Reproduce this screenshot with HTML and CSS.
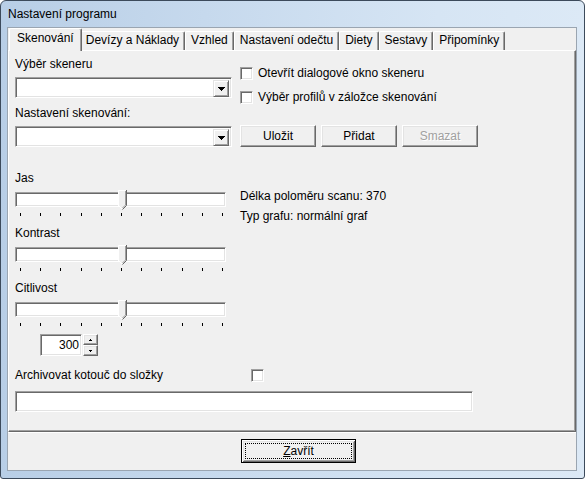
FILE: index.html
```html
<!DOCTYPE html>
<html lang="cs">
<head>
<meta charset="utf-8">
<title>Nastavení programu</title>
<link rel="stylesheet" href="styles.css">
</head>
<body>
<div class="window">
  <div class="titlebar">Nastavení programu</div>
  <div class="client">
    <div class="tabstrip">
      <div class="tab active">Skenování</div>
      <div class="tab">Devízy a Náklady</div>
      <div class="tab">Vzhled</div>
      <div class="tab">Nastavení odečtu</div>
      <div class="tab">Diety</div>
      <div class="tab">Sestavy</div>
      <div class="tab">Připomínky</div>
    </div>
    <div class="page">
      <div class="sec1">
        <div class="leftcol">
          <div class="label">Výběr skeneru</div>
          <div class="combo"><span class="drop"><svg width="7" height="4" viewBox="0 0 7 4"><path d="M0 0h7v1h-1v1h-1v1h-1v1h-1v-1h-1v-1h-1v-1h-1z" fill="#000"/></svg></span></div>
          <div class="label second">Nastavení skenování:</div>
          <div class="combo"><span class="drop"><svg width="7" height="4" viewBox="0 0 7 4"><path d="M0 0h7v1h-1v1h-1v1h-1v1h-1v-1h-1v-1h-1v-1h-1z" fill="#000"/></svg></span></div>
        </div>
        <div class="rightcol">
          <div class="checks">
            <div class="checkrow"><span class="checkbox"></span><span>Otevřít dialogové okno skeneru</span></div>
            <div class="checkrow"><span class="checkbox"></span><span>Výběr profilů v záložce skenování</span></div>
          </div>
          <div class="buttons">
            <div class="btn">Uložit</div>
            <div class="btn">Přidat</div>
            <div class="btn disabled">Smazat</div>
          </div>
        </div>
      </div>

      <div class="sec2">
        <div class="sliders">
          <div class="group">
            <div class="label">Jas</div>
            <div class="track"><svg class="thumb" width="9" height="20" viewBox="0 0 9 20"><path d="M0.5 15.5V0.5H8.5V15.5L4.5 19.5Z" fill="#f0f0f0"/><path d="M0.5 16V0.5H8" stroke="#fff" fill="none"/><path d="M8.5 0V15.5L4.5 19.5" stroke="#696969" fill="none"/><path d="M7.5 1V15L4.5 18" stroke="#a0a0a0" fill="none"/><path d="M0.5 15.5L4 19" stroke="#fff" fill="none"/></svg></div>
            <div class="ticks"><i></i><i></i><i></i><i></i><i></i><i></i><i></i><i></i><i></i><i></i><i></i></div>
          </div>
          <div class="group">
            <div class="label">Kontrast</div>
            <div class="track"><svg class="thumb" width="9" height="20" viewBox="0 0 9 20"><path d="M0.5 15.5V0.5H8.5V15.5L4.5 19.5Z" fill="#f0f0f0"/><path d="M0.5 16V0.5H8" stroke="#fff" fill="none"/><path d="M8.5 0V15.5L4.5 19.5" stroke="#696969" fill="none"/><path d="M7.5 1V15L4.5 18" stroke="#a0a0a0" fill="none"/><path d="M0.5 15.5L4 19" stroke="#fff" fill="none"/></svg></div>
            <div class="ticks"><i></i><i></i><i></i><i></i><i></i><i></i><i></i><i></i><i></i><i></i><i></i></div>
          </div>
          <div class="group">
            <div class="label">Citlivost</div>
            <div class="track"><svg class="thumb" width="9" height="20" viewBox="0 0 9 20"><path d="M0.5 15.5V0.5H8.5V15.5L4.5 19.5Z" fill="#f0f0f0"/><path d="M0.5 16V0.5H8" stroke="#fff" fill="none"/><path d="M8.5 0V15.5L4.5 19.5" stroke="#696969" fill="none"/><path d="M7.5 1V15L4.5 18" stroke="#a0a0a0" fill="none"/><path d="M0.5 15.5L4 19" stroke="#fff" fill="none"/></svg></div>
            <div class="ticks"><i></i><i></i><i></i><i></i><i></i><i></i><i></i><i></i><i></i><i></i><i></i></div>
          </div>
        </div>
        <div class="info">
          <div>Délka poloměru scanu: 370</div>
          <div>Typ grafu: normální graf</div>
        </div>
      </div>

      <div class="spinrow">
        <div class="spinedit">300</div>
        <div class="spinbtns">
          <span class="spinbtn"><svg width="3" height="2" viewBox="0 0 3 2"><path d="M1 0h1v1h1v1h-3v-1h1z" fill="#000"/></svg></span>
          <span class="spinbtn"><svg width="3" height="2" viewBox="0 0 3 2"><path d="M0 0h3v1h-1v1h-1v-1h-1z" fill="#000"/></svg></span>
        </div>
      </div>

      <div class="archrow">
        <span class="archlabel">Archivovat kotouč do složky</span>
        <span class="checkbox"></span>
      </div>

      <div class="textfield"></div>
    </div>
    <div class="bottom">
      <div class="btn default"><span class="focus"><u>Z</u>avřít</span></div>
    </div>
  </div>
</div>
</body>
</html>
```

FILE: styles.css
```css
* { box-sizing: border-box; }
html, body { margin: 0; padding: 0; }
body {
  width: 585px;
  height: 479px;
  overflow: hidden;
  background: #fff;
  font-family: "Liberation Sans", Arial, sans-serif;
  font-size: 12px;
  line-height: 14px;
  color: #000;
}
.window {
  width: 585px;
  height: 479px;
  border: 1px solid #3c4a5b;
  border-radius: 6px 6px 3px 3px;
  background: linear-gradient(to right, #b8cee6 0%, #c6d9ed 35%, #d6e5f4 75%, #dce9f6 100%);
  padding: 0 7px 7px 6px;
  display: flex;
  flex-direction: column;
}
.titlebar {
  height: 26px;
  padding: 6px 0 0 1px;
  color: #000;
}
.client {
  flex: 1;
  border: 1px solid #9aa5b1;
  background: #f0f0f0;
  display: flex;
  flex-direction: column;
}
.tabstrip {
  display: flex;
  align-items: flex-end;
  height: 22px;
  padding-left: 3px;
}
.tab {
  height: 19px;
  padding: 0 5px;
  border-top: 1px solid #fff;
  border-left: 1px solid #fff;
  border-right: 1px solid #696969;
  border-radius: 2px 2px 0 0;
  box-shadow: inset -1px 0 #a0a0a0;
  line-height: 17px;
  background: #f0f0f0;
  white-space: nowrap;
}
.tab.active {
  height: 23px;
  margin: 0 -2px -1px;
  padding: 0 7px;
  line-height: 19px;
  position: relative;
  z-index: 1;
}
.page {
  height: 382px;
  border: 1px solid;
  border-color: #fff #696969 #696969 #fff;
  box-shadow: inset -1px -1px #a0a0a0;
  padding: 6px 0 0 6px;
}
.sec1 {
  display: flex;
  gap: 8px;
}
.leftcol {
  width: 217px;
  display: flex;
  flex-direction: column;
}
.label.second { margin-top: 8px; }
.rightcol {
  display: flex;
  flex-direction: column;
  justify-content: space-between;
}
.combo {
  margin-top: 6px;
  width: 217px;
  height: 21px;
  background: #fff;
  border: 1px solid;
  border-color: #a0a0a0 #fff #fff #a0a0a0;
  box-shadow: inset 1px 1px #696969, inset -1px -1px #e3e3e3;
  display: flex;
  justify-content: flex-end;
  padding: 2px;
}
.drop {
  width: 16px;
  height: 17px;
  background: #f0f0f0;
  border: 1px solid;
  border-color: #e3e3e3 #696969 #696969 #e3e3e3;
  box-shadow: inset 1px 1px #fff, inset -1px -1px #a0a0a0;
  display: flex;
  align-items: center;
  justify-content: center;
}
.drop svg { display: block; margin-top: 1px; }
.checks {
  padding-top: 9px;
  display: flex;
  flex-direction: column;
  gap: 10px;
}
.checkrow {
  display: flex;
  align-items: center;
  height: 14px;
}
.checkbox {
  width: 13px;
  height: 13px;
  background: #fff;
  border: 1px solid;
  border-color: #a0a0a0 #fff #fff #a0a0a0;
  box-shadow: inset 1px 1px #696969, inset -1px -1px #e3e3e3;
  flex: none;
}
.checkrow .checkbox { margin-right: 5px; }
.buttons {
  display: flex;
  gap: 5px;
}
.btn {
  width: 76px;
  height: 22px;
  background: #f0f0f0;
  border: 1px solid;
  border-color: #fff #696969 #696969 #fff;
  box-shadow: inset -1px -1px #a0a0a0, inset 1px 1px #e3e3e3;
  display: flex;
  align-items: center;
  justify-content: center;
}
.btn.disabled {
  color: #a0a0a0;
  text-shadow: 1px 1px 0 #fff;
}
.sec2 {
  margin-top: 24px;
  display: flex;
  gap: 8px;
}
.sliders {
  width: 217px;
  display: flex;
  flex-direction: column;
  gap: 10px;
}
.track {
  position: relative;
  margin-top: 7px;
  width: 211px;
  height: 15px;
  background: #fff;
  border: 1px solid;
  border-color: #a0a0a0 #fff #fff #a0a0a0;
  box-shadow: inset 1px 1px #696969, inset -1px -1px #e3e3e3;
}
.thumb {
  position: absolute;
  left: 102px;
  top: -3px;
  display: block;
}
.ticks {
  margin-top: 6px;
  margin-left: 5px;
  width: 203px;
  height: 3px;
  display: flex;
  justify-content: space-between;
}
.ticks i {
  width: 1px;
  height: 3px;
  background: #000;
}
.info {
  padding-top: 15px;
  line-height: 20px;
}
.spinrow {
  margin-top: 8px;
  padding-left: 25px;
  display: flex;
  gap: 1px;
}
.spinedit {
  width: 42px;
  height: 22px;
  background: #fff;
  border: 1px solid;
  border-color: #a0a0a0 #fff #fff #a0a0a0;
  box-shadow: inset 1px 1px #696969, inset -1px -1px #e3e3e3;
  text-align: right;
  padding: 3px 2px 0 0;
  line-height: 14px;
}
.spinbtns {
  display: flex;
  flex-direction: column;
  width: 15px;
}
.spinbtn {
  height: 11px;
  background: #f0f0f0;
  border: 1px solid;
  border-color: #fff #696969 #696969 #fff;
  box-shadow: inset -1px -1px #a0a0a0, inset 1px 1px #e3e3e3;
  display: flex;
  align-items: center;
  justify-content: center;
}
.spinbtn svg { display: block; }
.archrow {
  margin-top: 12px;
  display: flex;
  align-items: center;
  height: 14px;
}
.archlabel {
  width: 236px;
}
.textfield {
  margin-top: 9px;
  width: 458px;
  height: 21px;
  background: #fff;
  border: 1px solid;
  border-color: #a0a0a0 #fff #fff #a0a0a0;
  box-shadow: inset 1px 1px #696969, inset -1px -1px #e3e3e3;
}
.bottom {
  height: 38px;
  border-top: 1px solid #fff;
  padding: 6px 0 0 233px;
}
.btn.default {
  width: 115px;
  height: 24px;
  border: 1px solid #000;
  box-shadow: inset 1px 1px #fff, inset -1px -1px #696969, inset 2px 2px #e3e3e3, inset -2px -2px #a0a0a0;
  padding: 3px;
}
.focus {
  flex: 1;
  height: 100%;
  border: 1px dotted #000;
  display: flex;
  align-items: center;
  justify-content: center;
}
.focus u { text-decoration: underline; }
```
